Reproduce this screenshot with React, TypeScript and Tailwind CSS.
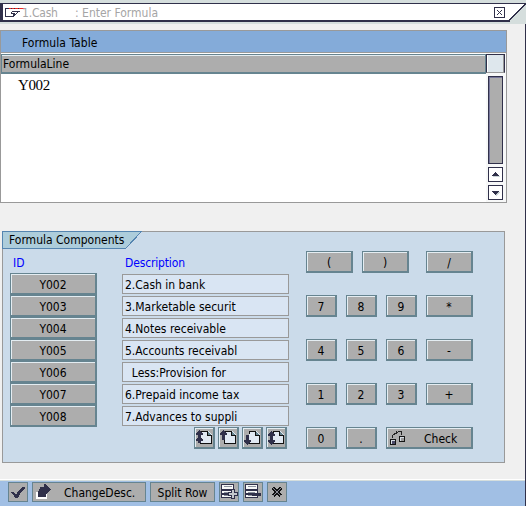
import React from "react";

const ids = ["Y002", "Y003", "Y004", "Y005", "Y006", "Y007", "Y008"];
const descriptions = [
  "2.Cash in bank",
  "3.Marketable securit",
  "4.Notes receivable",
  "5.Accounts receivabl",
  "\u00a0 Less:Provision for",
  "6.Prepaid income tax",
  "7.Advances to suppli",
];

const bevel =
  "flex items-center justify-center border border-r-2 border-b-2 border-[#668490] bg-[#adadad] shadow-[inset_1px_1px_0_#e4edf2]";
const flat = "flex h-5 items-center border border-[#668490] bg-[#adadad]";

function Svg({ w, h, children, className = "" }: { w: number; h: number; children: React.ReactNode; className?: string }) {
  return (
    <svg width={w} height={h} viewBox={`0 0 ${w} ${h}`} shapeRendering="crispEdges" className={`block shrink-0 ${className}`}>
      {children}
    </svg>
  );
}

function Key({ label, wide = false, className = "" }: { label: string; wide?: boolean; className?: string }) {
  return (
    <button className={`${bevel} h-[22px] pt-[2px] ${wide ? "w-[47px]" : "w-[31px]"} ${className}`}>
      <span>{label}</span>
    </button>
  );
}

function PageIcon({ kind }: { kind: "first" | "prev" | "next" | "last" }) {
  const up = "M3 0h1v1h1v1h1v1h1v2H5v2H2V5H0V3h1V2h1V1h1z";
  const down = "M2 0h3v2h2v2H6v1H5v1H4v1H3V6H2V5H1V4H0V2h2z";
  return (
    <Svg w={18} h={17}>
      <path d="M6 2h7l4 4v9H6z" fill="#e1e9f3" />
      <path d="M6 2h7v1H6zM16 6h1v9h-1zM5 14h12v1H5zM5 11h1v4H5zM6 2h1v3H6z" fill="#111" />
      <path d="M12 2h1v1h1v1h1v1h1v1h1v1h-5z" fill="#111" />
      <path d="M13 3h1v1h1v1h1v1h-3z" fill="#668490" />
      {kind === "first" && <g fill="#30304a"><path d={up} transform="translate(1 1)" /><path d={up} transform="translate(1 7)" /></g>}
      {kind === "prev" && <path d="M4 1h1v1h1v1h1v1h1v2H6v5H3V6H1V4h1V3h1V2h1z" fill="#30304a" />}
      {kind === "next" && <path d="M3 6h3v5h2v2H7v1H6v1H5v1H4v-1H3v-1H2v-1H1v-2h2z" fill="#30304a" />}
      {kind === "last" && <g fill="#30304a"><path d={up} transform="translate(1 2)" /><path d={down} transform="translate(1 9)" /></g>}
    </Svg>
  );
}

function RowsIcon({ add }: { add: boolean }) {
  return (
    <Svg w={18} h={18}>
      <path d="M1 1h13v14H1z" fill="#30304a" />
      <path d="M2 2h11v4H2zM2 8h11v2H2zM2 12h11v2H2z" fill="#f7f7f7" />
      <path d="M4 3h8v1H4zM4 9h7v1H4zM4 12h6v1H4z" fill="#8d929d" />
      {add ? (
        <>
          <path d="M11 6h4v3h3v4h-3v3h-4v-3H8V9h3z" fill="#30304a" />
          <path d="M12 7h2v3h3v2h-3v3h-2v-3H9v-2h3z" fill="#c4c8cc" />
        </>
      ) : (
        <path d="M8 10h9v3H8z" fill="#30304a" />
      )}
    </Svg>
  );
}

function ScrollButton({ down = false }: { down?: boolean }) {
  const arrow = down ? "M3 5h7v1H3zM4 6h5v1H4zM5 7h3v1H5zM6 8h1v1H6z" : "M6 4h1v1H6zM5 5h3v1H5zM4 6h5v1H4zM3 7h7v1H3z";
  return (
    <button className="size-[15px] border border-[#30304a] bg-white">
      <Svg w={13} h={13}>
        <path d={arrow} fill="#c9d4d6" transform="translate(1 1)" />
        <path d={arrow} fill="#30304a" />
      </Svg>
    </button>
  );
}

function TitleBar() {
  return (
    <header className="relative h-6 bg-[#d5dedd] pt-[3px]">
      <Svg w={526} h={19}>
        <path d="M0 0h525v1l-16 17H0z" fill="#fff" />
        <path d="M0 0h526v1H0zM0 0h3v19H0zM0 17h509v2H0z" fill="#30304a" />
        <path d="M508.500 18.500L525.500 1" stroke="#30304a" strokeWidth="1.5" fill="none" />
        <path d="M19.500 5.500H5.500V13.500H13.500V11.500H15.500M11.500 8.500H19.500M11.500 8.500V10.500H14.500" stroke="#30304a" fill="none" />
        <path d="M18 8h1v1h-1zM17 9h1v1h-1zM16 10h1v1h-1zM15 11h1v1h-1zM14 12h1v1h-1z" fill="#30304a" />
        <path d="M9 5h2v1H9zM12 5h2v1h-2zM15 5h3v1h-3zM19 5h6v1h-6z" fill="#ef2b20" />
        <path d="M494.500 4.500h10v10h-10z" fill="#fff" stroke="#30304a" />
        <path d="M497 7h1v1h1v1h1v1h-1v1h-1v1h-1v-1h1v-1h1V9h-1V8h-1zM501 7h1v1h-1v1h-1v1h1v1h1v1h-1v-1h-1v-1h-1V9h1V8h1z" fill="#30304a" />
      </Svg>
      <h1 className="absolute left-[22px] top-[5px] flex leading-4 text-[#a5a5a5]">
        <span className="w-[53px] tracking-[-0.2px]">1.Cash</span>
        <span>: Enter Formula</span>
      </h1>
    </header>
  );
}

export default function App() {
  return (
    <main className="flex h-[506px] w-[526px] flex-col overflow-hidden bg-[#f0f0f0] font-['DejaVu_Sans_Condensed','DejaVu_Sans',sans-serif] text-[12px] leading-4 text-black [font-stretch:condensed]">
      <TitleBar />
      <div className="flex h-[482px] flex-col border-r border-[#30304a]">
        <section className="mt-[6px] h-[173px] w-[507px] border border-[#999] bg-white">
          <h2 className="h-[22px] border-b border-[#999] bg-[#84abd9] pl-[21px] pt-[4px] tracking-[0.05px]">Formula Table</h2>
          <div className="flex h-[149px]">
            <div className="w-[485px]">
              <div className="mt-px h-5 border border-b-2 border-[#668490] bg-[#adadad] pl-px leading-[19px] shadow-[inset_0_1px_0_#e4edf2]">FormulaLine</div>
              <div className="pl-[17px] pt-[2px] font-['Liberation_Serif',serif] text-[15px] leading-[18px] tracking-[-0.4px]">Y002</div>
            </div>
            <div className="flex w-5 flex-col bg-[#f7f8f8] pt-px">
              <div className="h-[19px] w-[19px] border border-b-[#999] border-[#30304a] bg-[#dee7ed] shadow-[inset_1px_0_0_#fff,inset_-1px_0_0_#999]" />
              <div className="ml-[2px] mt-[3px] flex flex-col">
                <div className="mb-[3px] h-[88px] w-[15px] border border-[#30304a] bg-[#adadad] shadow-[inset_1px_1px_0_#77779b]" />
                <ScrollButton />
                <div className="h-[3px]" />
                <ScrollButton down />
              </div>
            </div>
          </div>
        </section>

        <section className="ml-[2px] mt-[28px] h-[232px] w-[503px] border border-[#999] bg-[#cbdbea]">
          <div className="relative -ml-px -mt-px h-[18px] w-[141px]">
            <Svg w={141} h={18}>
              <path d="M.5 .5H139.500L123.500 17.500H.5z" fill="#adcddb" stroke="#5585b0" />
            </Svg>
            <h2 className="absolute left-[7px] top-px">Formula Components</h2>
          </div>
          <div className="flex">
            <div className="ml-[7px] w-[87px]">
              <h3 className="mt-[6px] h-[18px] pl-[3px] text-[#0000ff]">ID</h3>
              <div className="flex flex-col">
                {ids.map((id) => (
                  <button key={id} className={`${bevel} h-[22px] w-[87px] pt-[2px]`}>{id}</button>
                ))}
              </div>
            </div>
            <div className="ml-[25px] w-[167px]">
              <h3 className="mt-[6px] h-[19px] pl-[3px] tracking-[-0.15px] text-[#0000ff]">Description</h3>
              <div className="flex flex-col gap-[2px]">
                {descriptions.map((text) => (
                  <div key={text} className="h-5 border border-[#999] bg-[#d9e5f3] pl-[2px] leading-[20px]">{text}</div>
                ))}
              </div>
              <div className="ml-[72px] mt-px flex gap-[3px]">
                {(["first", "prev", "next", "last"] as const).map((kind) => (
                  <button key={kind} className={`${bevel} h-[22px] w-[21px]`}><PageIcon kind={kind} /></button>
                ))}
              </div>
            </div>
            <div className="ml-[17px] mt-[2px] flex flex-col gap-[22px]">
              <div className="flex"><Key label="(" wide /><Key label=")" wide className="ml-[9px]" /><Key label="/" wide className="ml-[17px]" /></div>
              <div className="flex gap-[9px]"><Key label="7" /><Key label="8" /><Key label="9" /><Key label="*" wide /></div>
              <div className="flex gap-[9px]"><Key label="4" /><Key label="5" /><Key label="6" /><Key label="-" wide /></div>
              <div className="flex gap-[9px]"><Key label="1" /><Key label="2" /><Key label="3" /><Key label="+" wide /></div>
              <div className="flex gap-[9px]">
                <Key label="0" /><Key label="." />
                <button className={`${bevel} h-[22px] w-[87px] !justify-start`}>
                  <Svg w={18} h={16} className="ml-[2px]">
                    <path d="M3 8V5h1V4h1V3h2v1H6v1H4v3zM7 1h1v3H7zM8 2h1v1H8zM9 1h4v4h-1V2H9z" fill="#222" />
                    <path d="M1 9h6v6H1zM10 6h6v6h-6z" fill="#151515" />
                    <path d="M2 10h4v1H3v3H2zM11 7h4v1h-3v3h-1z" fill="#d6dde5" />
                    <path d="M3 11h3v3H3z" fill="#4a4a68" />
                    <path d="M12 8h3v3h-3z" fill="#999" />
                  </Svg>
                  <span className="ml-[17px] pt-[2px]">Check</span>
                </button>
              </div>
            </div>
          </div>
        </section>

        <footer className="mt-4 flex h-[27px] gap-1 border-t border-white bg-[#a1bfe4] pl-2 pt-[2px] shadow-[inset_0_1px_0_#d5dedd]">
          <button className={`${flat} w-5 justify-center`}>
            <Svg w={16} h={14}>
              <path d="M1 7h3v1h1v1h2V7h1V6h1V5h1V4h1V3h1V2h3v2h-1v1h-1v1h-1v1h-1v1h-1v2H9v2H8v1H5v-1H4v-2H3V9H2V8H1z" fill="#30304a" />
            </Svg>
          </button>
          <button className={`${flat} w-[114px]`}>
            <Svg w={18} h={18} className="ml-[2px]">
              <path d="M1 9h11v7H1z" fill="#fff" />
              <path d="M3 14V8h1V6h1V4h4V1h2v1h1v1h1v1h1v1h1v1h1v1h-1v1h-1v1h-1v1h-1v1h-1v3z" fill="#30304a" />
            </Svg>
            <span className="ml-[11px] pt-px">ChangeDesc.</span>
          </button>
          <button className={`${flat} w-[65px] justify-center pt-px`}>Split Row</button>
          <button className={`${flat} w-5`}><RowsIcon add /></button>
          <button className={`${flat} w-5`}><RowsIcon add={false} /></button>
          <button className={`${flat} w-5 justify-center`}>
            <Svg w={12} h={12}>
              <path d="M2 2L10 10M10 2L2 10" stroke="#111" strokeWidth="4" />
              <path d="M2 2L10 10M10 2L2 10" stroke="#8c8c98" strokeWidth="1" />
            </Svg>
          </button>
        </footer>
      </div>
    </main>
  );
}
